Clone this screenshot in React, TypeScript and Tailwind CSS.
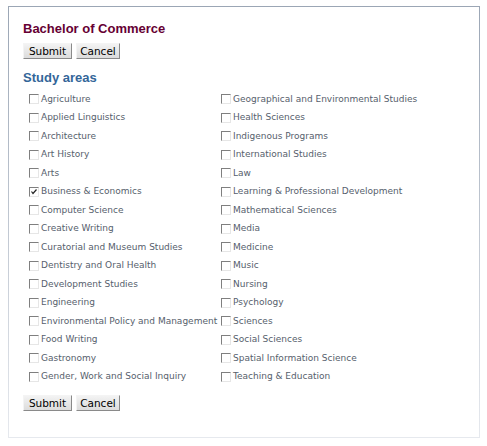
import React from 'react';

const left = [
  'Agriculture',
  'Applied Linguistics',
  'Architecture',
  'Art History',
  'Arts',
  'Business & Economics',
  'Computer Science',
  'Creative Writing',
  'Curatorial and Museum Studies',
  'Dentistry and Oral Health',
  'Development Studies',
  'Engineering',
  'Environmental Policy and Management',
  'Food Writing',
  'Gastronomy',
  'Gender, Work and Social Inquiry',
];

const right = [
  'Geographical and Environmental Studies',
  'Health Sciences',
  'Indigenous Programs',
  'International Studies',
  'Law',
  'Learning & Professional Development',
  'Mathematical Sciences',
  'Media',
  'Medicine',
  'Music',
  'Nursing',
  'Psychology',
  'Sciences',
  'Social Sciences',
  'Spatial Information Science',
  'Teaching & Education',
];

function Box({ checked }: { checked?: boolean }) {
  return (
    <span className="relative flex h-[10px] w-[10px] shrink-0 border-t border-l border-t-[#7f7f7f] border-l-[#7f7f7f] border-r border-b border-r-[#e6e6e6] border-b-[#e6e6e6] bg-white">
      {checked && (
        <svg viewBox="0 0 8 8" className="absolute left-0 top-0 h-[8px] w-[8px]">
          <path d="M1.5 3.5 L3 5.5 L6.5 1.5" fill="none" stroke="#222" strokeWidth="1.2" />
        </svg>
      )}
    </span>
  );
}

function Item({ label, checked }: { label: string; checked?: boolean }) {
  return (
    <label className="flex h-[18.53px] items-center gap-[2px]">
      <Box checked={checked} />
      <span className="whitespace-nowrap text-[9px] text-[#56606c] leading-none">{label}</span>
    </label>
  );
}

function Buttons() {
  return (
    <div className="flex gap-[4px]">
      <button className="h-[16px] w-[49px] border border-t-[#f4f4f4] border-l-[#f4f4f4] border-r-[#8a8a8a] border-b-[#8a8a8a] bg-gradient-to-b from-[#f3f3f3] to-[#dcdcdc] text-[10.5px] text-black leading-none">
        Submit
      </button>
      <button className="h-[16px] w-[44px] border border-t-[#f4f4f4] border-l-[#f4f4f4] border-r-[#8a8a8a] border-b-[#8a8a8a] bg-gradient-to-b from-[#f3f3f3] to-[#dcdcdc] text-[10.5px] text-black leading-none">
        Cancel
      </button>
    </div>
  );
}

export default function App() {
  return (
    <div className="h-[446px] w-[487px] bg-white pl-[8px] pt-[6px]" style={{ fontFamily: '"DejaVu Sans", Verdana, sans-serif' }}>
      <div className="h-[432px] w-[472px] bg-gradient-to-b from-[#9ba6b5] to-[#e6e9ee] p-px">
        <div className="h-full w-full bg-white pl-[14px] pt-[14px]">
          <h1 className="text-[13px] font-bold leading-[16px] text-[#660033]" style={{ fontFamily: '"Liberation Sans", Arial, sans-serif' }}>
            Bachelor of Commerce
          </h1>
          <div className="mt-[6px]">
            <Buttons />
          </div>
          <h2 className="mt-[11px] text-[13px] font-bold leading-[16px] text-[#336699]" style={{ fontFamily: '"Liberation Sans", Arial, sans-serif' }}>
            Study areas
          </h2>
          <div className="mt-[4px] flex pl-[6px]">
            <div className="w-[192px]">
              {left.map((l) => (
                <Item key={l} label={l} checked={l === 'Business & Economics'} />
              ))}
            </div>
            <div>
              {right.map((l) => (
                <Item key={l} label={l} />
              ))}
            </div>
          </div>
          <div className="mt-[9px]">
            <Buttons />
          </div>
        </div>
      </div>
    </div>
  );
}
